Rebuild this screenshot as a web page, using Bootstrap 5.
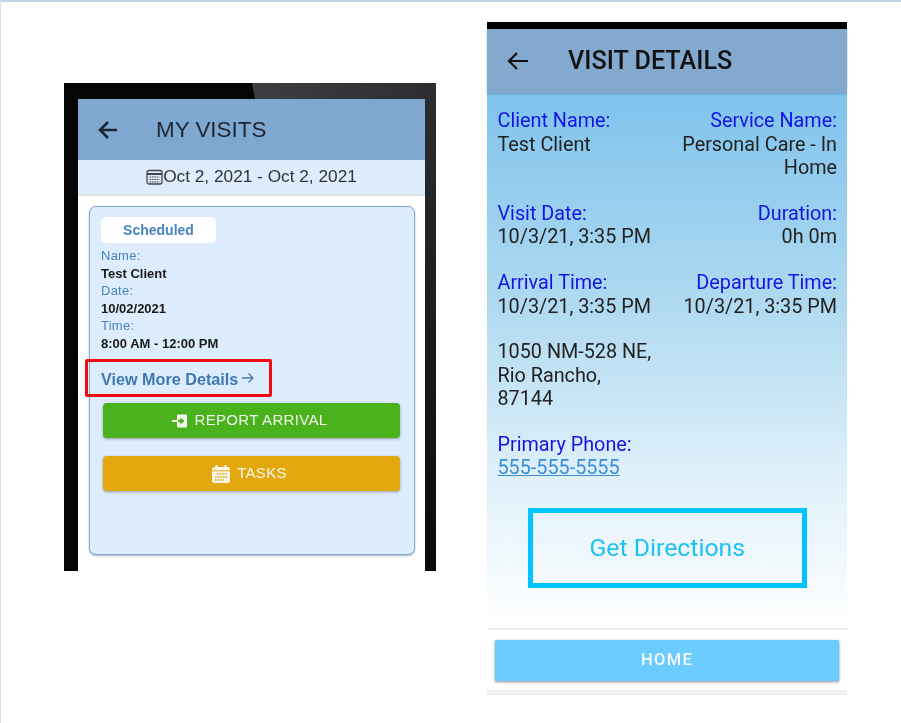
<!DOCTYPE html>
<html lang="en"><head><meta charset="utf-8"><title>Visits</title>
<link href="https://cdn.jsdelivr.net/npm/bootstrap@5.3.0/dist/css/bootstrap.min.css" rel="stylesheet">
<style>
html,body{height:100%;margin:0;background:#fff}
.sheet{height:723px;width:901px;overflow:hidden;border-top:2px solid #c6d4e8;border-left:1px solid #d3deee;background:#fff}
.phone-a{width:372px;height:488px;margin:81px 0 0 63px;padding:16px 11px 0 14px;background:#050505;position:relative;font-family:"Liberation Sans",sans-serif;flex:none;filter:blur(.4px)}
.phone-a .topshade{position:absolute;top:0;right:0;width:184px;height:16px;background:linear-gradient(90deg,#3c3e41,#2c2d30);clip-path:polygon(0 0,100% 0,100% 100%,3px 100%)}
.phone-a .sideshade{position:absolute;top:16px;right:0;width:11px;bottom:0;background:linear-gradient(180deg,#2c2d30,#0a0a0a)}
.screen-a{height:100%;background:#fff;overflow:hidden}
.bar-a{height:61px;background:#7fa8d0;color:#1c2530;padding:1px 0 0 20px;gap:38px}
.bar-a h1{font-size:22.4px;font-weight:400;margin:0;font-family:"Liberation Sans",sans-serif}
.range{height:36px;background:#deedfd;border-bottom:2px solid #e2e1de;font-size:17.25px;color:#333}
.visit{margin:10px 10px 0 11px;height:349px;background:#deedfd;border:1px solid #7fa8d5;border-radius:7px;box-shadow:0 1px 2px rgba(60,80,110,.45);padding:10px 14px 0 11px;font-size:13px}
.pill{width:115px;height:26px;background:#fff;border-radius:5px;color:#4a83bd;font-weight:700;font-size:14px;margin-bottom:4px}
.lab{color:#4a83bd;line-height:17.5px;font-weight:400;letter-spacing:.25px}
.val{color:#1a1a1a;font-weight:700;line-height:17.5px}
.more{width:187px;height:38px;margin:7px 0 6px -16px;border:3px solid #f00a14;border-radius:2px;color:#3f79b5;font-weight:700;font-size:16.2px;padding:3px 0 0 13px}
.act{width:297px;height:35px;margin-left:2px;border:0;border-radius:4px;color:#f3f7ee;font-size:15px;box-shadow:0 1px 3px rgba(0,0,0,.35);gap:7px;letter-spacing:.33px;padding:0 4px 0 0}
.act-g{background:#4ab21c}
.act-y{background:#e4a80f;margin-top:18px}
.phone-b{width:360px;height:673px;margin:20px 0 0 51px;font-family:Roboto,sans-serif;flex:none;background:#fff;filter:blur(.25px)}
.notch{height:7px;background:#000}
.bar-b{height:64px;background:#83a9cf;box-shadow:0 1px 2px rgba(60,90,120,.35);padding-left:20px;gap:39px;color:#111;position:relative}
.bar-b h1{font-size:25.2px;font-weight:500;margin:0;font-family:Roboto,sans-serif}
.details{height:535px;background:linear-gradient(180deg,#7fc3ec 0,#b0daf1 40%,#dff0fa 72%,#fff 100%);padding:16.4px 10px 0 10.5px;font-size:19.8px;line-height:23.4px;color:#222}
.pair{margin-bottom:22.4px}
.pair > div{max-width:175px}
.key{color:#1414e6}
.tel{color:#3b8fd8}
.direct{width:279px;height:80px;margin:28px auto 0;border:5px solid #00c3ff;color:#1cc3f2;font-size:24.8px}
.rule1{height:2px;background:#eee}
.home-wrap{padding:10px 8px 9px}
.home-btn{height:41px;width:344px;border:0;background:#6ccbff;color:#f4fbff;font-size:16.5px;font-weight:500;letter-spacing:1.3px;border-radius:1px;box-shadow:0 1px 3px rgba(0,0,0,.45);padding:0}
.rule2{height:5px;background:#f1f1f1}
</style></head>
<body>
<div class="sheet d-flex align-items-start">
  <section class="phone-a">
    <div class="topshade"></div><div class="sideshade"></div>
    <div class="screen-a position-relative">
      <div class="bar-a d-flex align-items-center">
        <svg width="20" height="20" viewBox="0 0 20 20" fill="none" stroke="#1c2530" stroke-width="2.5"><path d="M19 10H2M10 2 2 10l8 8"/></svg>
        <h1>MY VISITS</h1>
      </div>
      <div class="range d-flex align-items-center justify-content-center">
        <svg width="17" height="16" viewBox="0 0 17 16" fill="none" stroke="#444"><rect x="1" y="1.5" width="15" height="13.5" rx="2" stroke-width="1.3"/><path d="M1 5h15" stroke-width="2"/><path d="M3.5 8h10M3.5 10.5h10M3.5 13h10" stroke-width="1.2" stroke-dasharray="1.6 .8"/></svg>
        <span>Oct 2, 2021 - Oct 2, 2021</span>
      </div>
      <div class="visit">
        <div class="pill d-flex align-items-center justify-content-center">Scheduled</div>
        <div class="lab">Name:</div><div class="val">Test Client</div>
        <div class="lab">Date:</div><div class="val">10/02/2021</div>
        <div class="lab">Time:</div><div class="val">8:00 AM - 12:00 PM</div>
        <div class="more d-flex align-items-center">View More Details<svg class="ms-1 mb-1" width="12" height="12" viewBox="0 0 12 12" fill="none" stroke="#3f79b5" stroke-width="1.3"><path d="M0 6h11M6.5 1.5 11 6l-4.5 4.5"/></svg></div>
        <button type="button" class="act act-g d-flex align-items-center justify-content-center">
          <svg width="16" height="16" viewBox="0 0 16 16"><rect x="5" y="1.5" width="10" height="13" rx="1" fill="#f3f7ee"/><path fill="#f3f7ee" d="M0 7h6v2H0z"/><path fill="#4ab21c" d="M6 6.800h2.500V4.500L12.500 8l-4 3.500V9.200H6z"/></svg>
          REPORT ARRIVAL</button>
        <button type="button" class="act act-y d-flex align-items-center justify-content-center">
          <svg width="18" height="18" viewBox="0 0 18 18"><rect x="0" y="2" width="18" height="16" rx="2.5" fill="#f8f4e6"/><path d="M4.500 0v4M13.500 0v4" stroke="#f8f4e6" stroke-width="2"/><path d="M0 5.800h18" stroke="#e4a80f"/><path d="M5 9h10M3 12h12M3 15h9" stroke="#e4a80f" stroke-width="1.6" stroke-dasharray="1.6 1"/></svg>
          TASKS</button>
      </div>
    </div>
  </section>
  <section class="phone-b">
    <div class="notch"></div>
    <div class="bar-b d-flex align-items-center">
      <svg width="22" height="20" viewBox="0 0 22 20" fill="none" stroke="#111" stroke-width="2.2"><path d="M21 10H2M10 2 2 10l8 8"/></svg>
      <h1>VISIT DETAILS</h1>
    </div>
    <div class="details">
      <div class="pair d-flex justify-content-between"><div><div class="key">Client Name:</div>Test Client</div><div class="text-end"><div class="key">Service Name:</div>Personal Care - In Home</div></div>
      <div class="pair d-flex justify-content-between"><div><div class="key">Visit Date:</div>10/3/21, 3:35 PM</div><div class="text-end"><div class="key">Duration:</div>0h 0m</div></div>
      <div class="pair d-flex justify-content-between"><div><div class="key">Arrival Time:</div>10/3/21, 3:35 PM</div><div class="text-end"><div class="key">Departure Time:</div>10/3/21, 3:35 PM</div></div>
      <div class="pair"><div>1050 NM-528 NE,<br>Rio Rancho,<br>87144</div></div>
      <div><div class="key">Primary Phone:</div><a class="tel" href="#">555-555-5555</a></div>
      <div class="direct d-flex align-items-center justify-content-center">Get Directions</div>
    </div>
    <div class="rule1"></div>
    <div class="home-wrap"><button type="button" class="home-btn d-block">HOME</button></div>
    <div class="rule2"></div>
  </section>
</div>
</body></html>
